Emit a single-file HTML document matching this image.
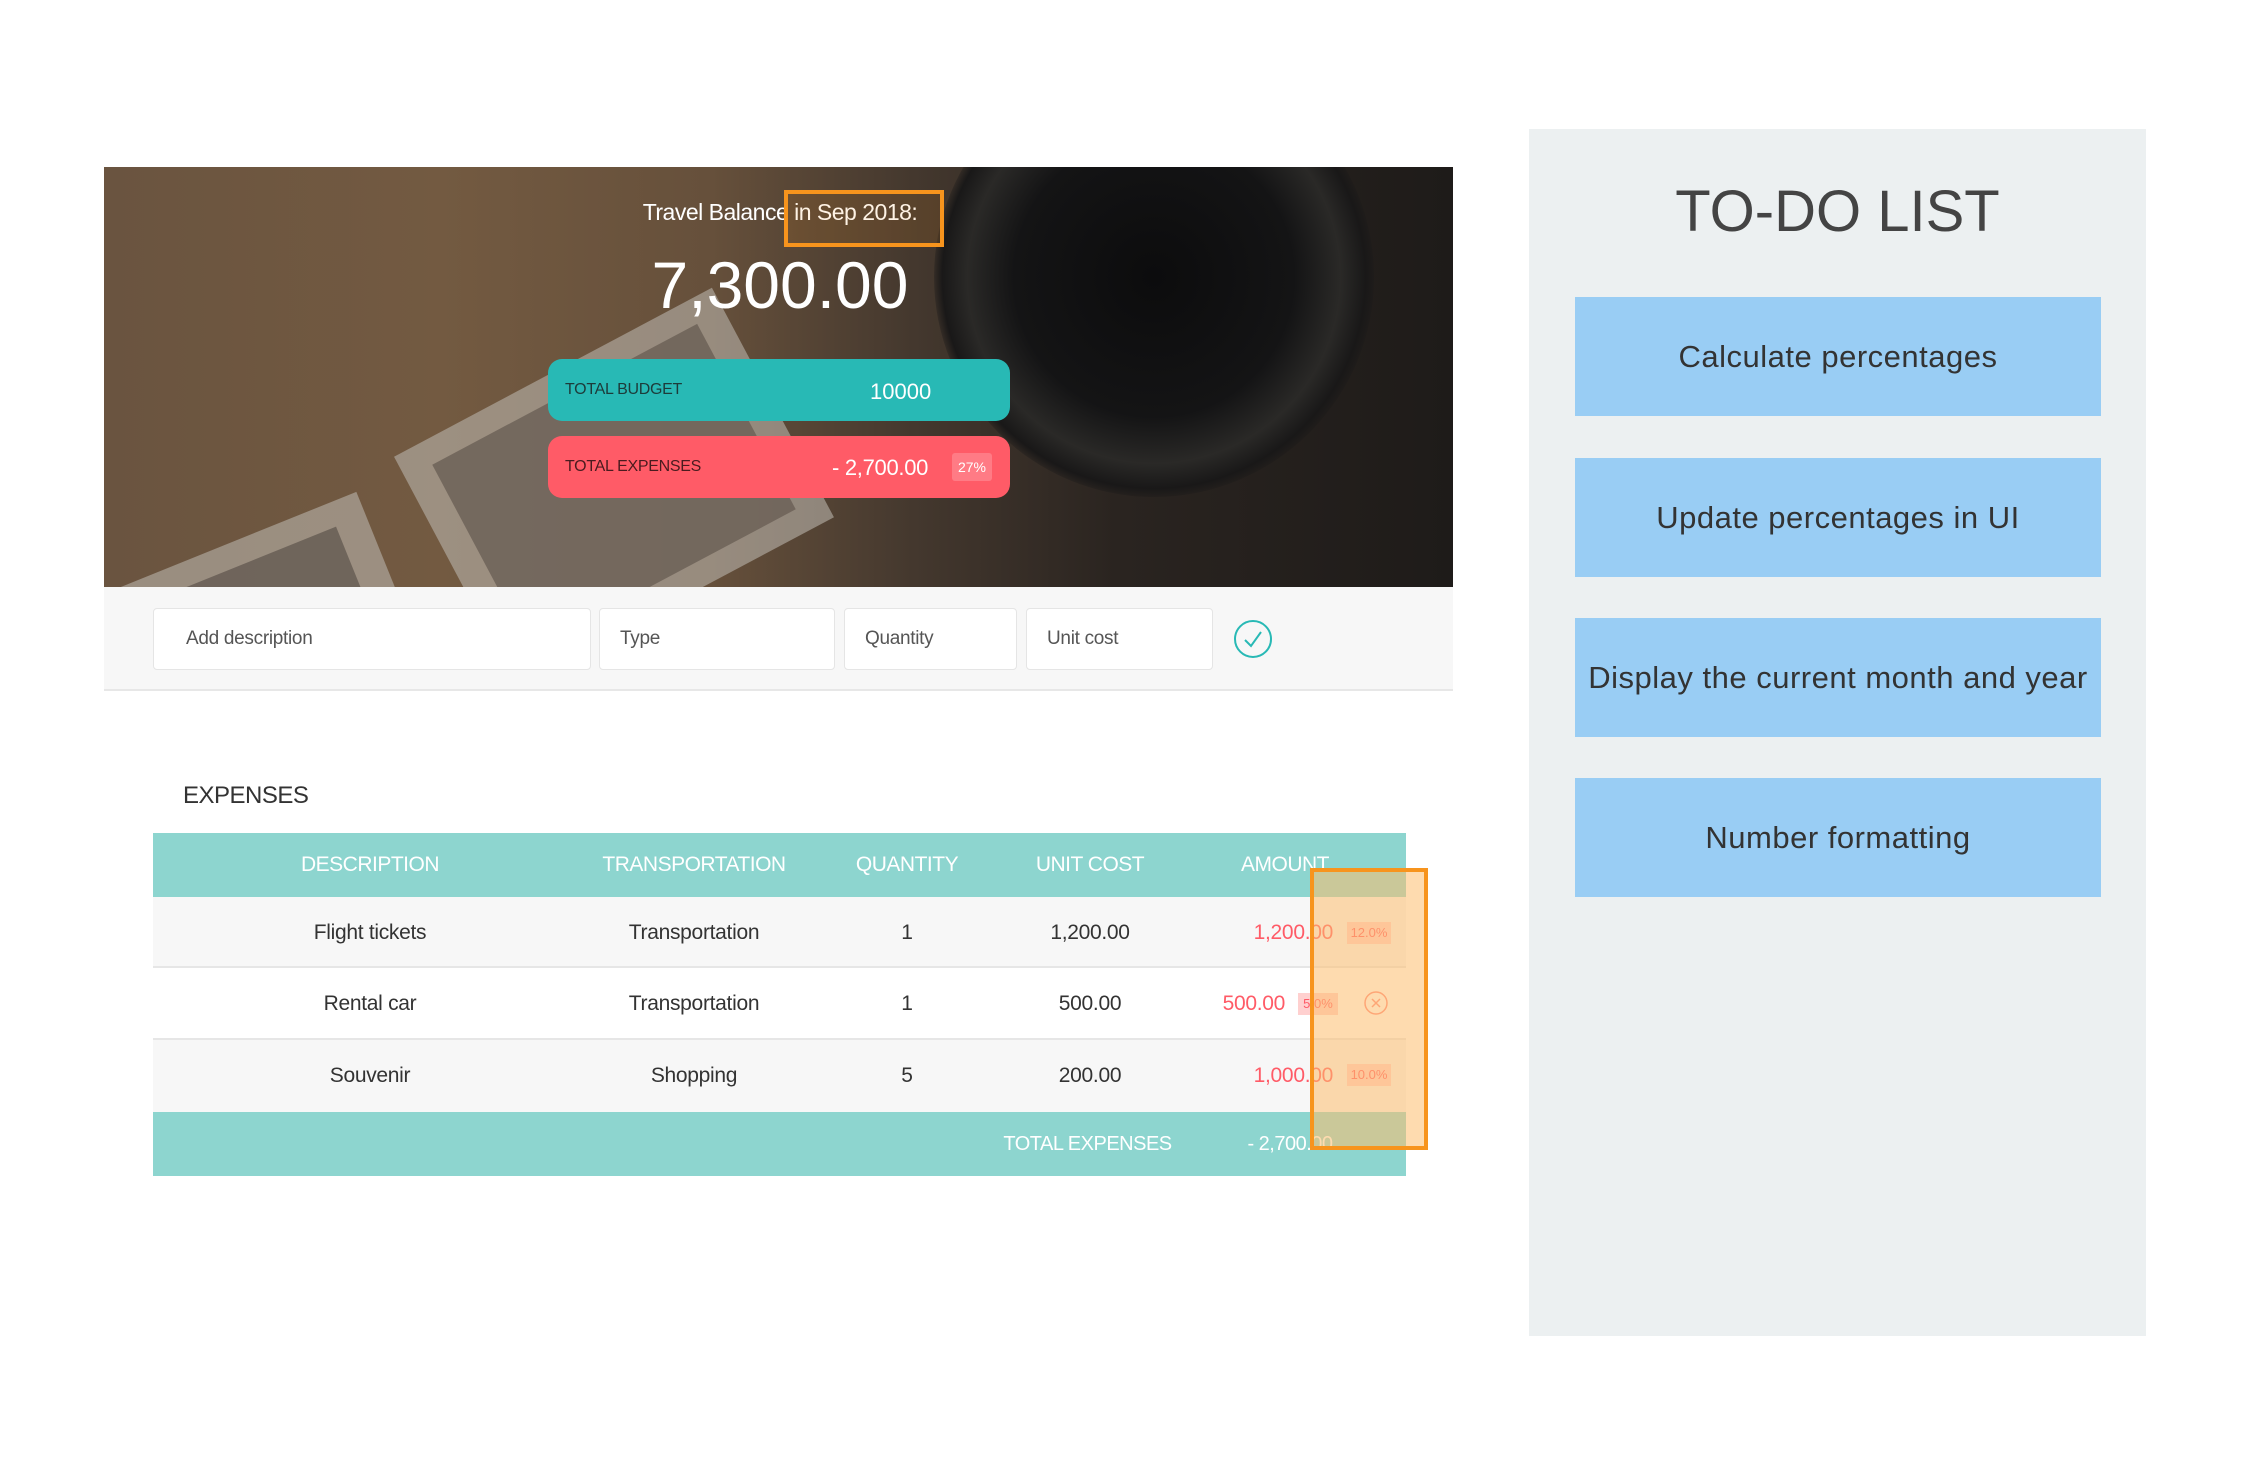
<!DOCTYPE html>
<html><head><meta charset="utf-8"><style>
*{margin:0;padding:0;box-sizing:border-box}
body{width:2243px;height:1466px;background:#fff;position:relative;overflow:hidden;font-family:"Liberation Sans",sans-serif;}
.abs{position:absolute}
.hero{left:104px;top:167px;width:1349px;height:420px;overflow:hidden;
background:linear-gradient(90deg,#6a5440 0%,#735a41 25%,#66503b 45%,#44382e 60%,#2a2420 75%,#1e1b19 100%);}
.c{text-align:center}
.bar{left:548px;width:462px;height:62px;border-radius:14px;color:#fff}
.inp{top:608px;height:62px;background:#fff;border:1px solid #e5e5e5;border-radius:4px;font-size:19px;color:#555;line-height:60px;padding-left:32px;letter-spacing:-0.3px}
.th{top:833px;height:64px;line-height:64px;color:#fff;font-size:21px;text-align:center;letter-spacing:-0.5px}
.td{font-size:21px;color:#333;text-align:center;letter-spacing:-0.3px}
.todo{left:1575px;width:526px;height:119px;background:#99cdf4;color:#333;font-size:31px;text-align:center;line-height:119px;letter-spacing:0.5px}
</style></head><body>
<div class="abs hero">
 <div class="abs" style="left:830px;top:-110px;width:440px;height:440px;border-radius:50%;background:radial-gradient(circle,#0c0c0d 0%,#141415 45%,#2a2927 60%,#191818 68%,rgba(30,27,25,0) 72%)"></div>
 <div class="abs" style="left:330px;top:190px;width:360px;height:260px;background:#b9b4ac;transform:rotate(-28deg);opacity:.6"></div>
 <div class="abs" style="left:360px;top:215px;width:300px;height:210px;background:#6a5f55;transform:rotate(-28deg);opacity:.8"></div>
 <div class="abs" style="left:20px;top:370px;width:280px;height:200px;background:#b9b4ac;transform:rotate(-22deg);opacity:.6"></div>
 <div class="abs" style="left:50px;top:395px;width:220px;height:160px;background:#645a51;transform:rotate(-22deg);opacity:.8"></div>
</div>
<div class="abs c" style="left:500px;top:199px;width:560px;color:#fff;font-size:23px;letter-spacing:-0.5px">Travel Balance in Sep 2018:</div>
<div class="abs" style="left:784px;top:190px;width:160px;height:57px;border:4px solid #f7941d;background:rgba(247,148,29,0.12)"></div>
<div class="abs c" style="left:500px;top:247px;width:560px;color:#fff;font-size:66px;font-weight:300">7,300.00</div>
<div class="abs bar" style="top:359px;background:#28b9b5">
 <span class="abs" style="left:17px;top:22px;font-size:16px;color:#1d3b3a;letter-spacing:-0.3px">TOTAL BUDGET</span>
 <span class="abs" style="left:322px;top:20px;font-size:22px">10000</span></div>
<div class="abs bar" style="top:436px;background:#ff5b67">
 <span class="abs" style="left:17px;top:22px;font-size:16px;color:#4a1b1f;letter-spacing:-0.3px">TOTAL EXPENSES</span>
 <span class="abs" style="left:284px;top:19px;font-size:22px;letter-spacing:-0.3px">- 2,700.00</span>
 <span class="abs" style="left:404px;top:17px;width:40px;height:28px;background:rgba(255,255,255,0.2);border-radius:3px;font-size:14px;line-height:28px;text-align:center">27%</span></div>
<div class="abs" style="left:104px;top:587px;width:1349px;height:104px;background:#f7f7f7;border-bottom:2px solid #e7e7e7"></div>
<div class="abs inp" style="left:153px;width:438px">Add description</div>
<div class="abs inp" style="left:599px;width:236px;padding-left:20px">Type</div>
<div class="abs inp" style="left:844px;width:173px;padding-left:20px">Quantity</div>
<div class="abs inp" style="left:1026px;width:187px;padding-left:20px">Unit cost</div>
<svg class="abs" style="left:1233px;top:619px" width="40" height="40" viewBox="0 0 40 40"><circle cx="20" cy="20" r="18" fill="none" stroke="#28b9b5" stroke-width="2"/><path d="M12 21 L18 27 L28 13" fill="none" stroke="#28b9b5" stroke-width="2"/></svg>
<div class="abs" style="left:183px;top:782px;font-size:24px;color:#333;letter-spacing:-0.5px">EXPENSES</div>
<div class="abs" style="left:153px;top:833px;width:1253px;height:64px;background:#8dd5cf"></div>
<div class="abs" style="left:153px;top:897px;width:1253px;height:71px;background:#f7f7f7;border-bottom:2px solid #e6e6e6"></div>
<div class="abs" style="left:153px;top:968px;width:1253px;height:72px;background:#fff;border-bottom:2px solid #e6e6e6"></div>
<div class="abs" style="left:153px;top:1040px;width:1253px;height:72px;background:#f7f7f7"></div>
<div class="abs" style="left:153px;top:1112px;width:1253px;height:64px;background:#8dd5cf"></div>
<div class="abs th" style="left:270px;width:200px">DESCRIPTION</div>
<div class="abs th" style="left:584px;width:220px">TRANSPORTATION</div>
<div class="abs th" style="left:827px;width:160px">QUANTITY</div>
<div class="abs th" style="left:1010px;width:160px">UNIT COST</div>
<div class="abs th" style="left:1205px;width:160px">AMOUNT</div>
<div class="abs td" style="left:270px;width:200px;top:921px">Flight tickets</div>
<div class="abs td" style="left:584px;width:220px;top:921px">Transportation</div>
<div class="abs td" style="left:857px;width:100px;top:921px">1</div>
<div class="abs td" style="left:1010px;width:160px;top:921px">1,200.00</div>
<div class="abs td" style="left:1180px;width:153px;top:921px;text-align:right;color:#ff5b67">1,200.00</div>
<div class="abs td" style="left:270px;width:200px;top:992px">Rental car</div>
<div class="abs td" style="left:584px;width:220px;top:992px">Transportation</div>
<div class="abs td" style="left:857px;width:100px;top:992px">1</div>
<div class="abs td" style="left:1010px;width:160px;top:992px">500.00</div>
<div class="abs td" style="left:1130px;width:155px;top:992px;text-align:right;color:#ff5b67">500.00</div>
<div class="abs td" style="left:270px;width:200px;top:1064px">Souvenir</div>
<div class="abs td" style="left:584px;width:220px;top:1064px">Shopping</div>
<div class="abs td" style="left:857px;width:100px;top:1064px">5</div>
<div class="abs td" style="left:1010px;width:160px;top:1064px">200.00</div>
<div class="abs td" style="left:1180px;width:153px;top:1064px;text-align:right;color:#ff5b67">1,000.00</div>
<div class="abs" style="left:1347px;top:922px;width:44px;height:22px;background:#ffd0cf;color:#ff5b67;font-size:13px;text-align:center;line-height:22px">12.0%</div>
<div class="abs" style="left:1298px;top:993px;width:40px;height:22px;background:#ffd0cf;color:#ff5b67;font-size:13px;text-align:center;line-height:22px">5.0%</div>
<div class="abs" style="left:1347px;top:1064px;width:44px;height:22px;background:#ffd0cf;color:#ff5b67;font-size:13px;text-align:center;line-height:22px">10.0%</div>
<svg class="abs" style="left:1363px;top:990px" width="26" height="26" viewBox="0 0 26 26"><circle cx="13" cy="13" r="11" fill="none" stroke="#ff8a80" stroke-width="1.5"/><path d="M9 9L17 17M17 9L9 17" stroke="#ff8a80" stroke-width="1.5"/></svg>
<div class="abs th" style="left:990px;top:1112px;width:195px;font-size:20px">TOTAL EXPENSES</div>
<div class="abs th" style="left:1220px;top:1112px;width:140px;font-size:20px">- 2,700.00</div>
<div class="abs" style="left:1310px;top:868px;width:118px;height:282px;border:4px solid #f7941d;background:rgba(253,190,110,0.55)"></div>
<div class="abs" style="left:1529px;top:129px;width:617px;height:1207px;background:#ecf0f1"></div>
<div class="abs c" style="left:1529px;top:178px;width:617px;font-size:58px;color:#444">TO-DO LIST</div>
<div class="abs todo" style="top:297px">Calculate percentages</div>
<div class="abs todo" style="top:458px">Update percentages in UI</div>
<div class="abs todo" style="top:618px">Display the current month and year</div>
<div class="abs todo" style="top:778px">Number formatting</div>
</body></html>
